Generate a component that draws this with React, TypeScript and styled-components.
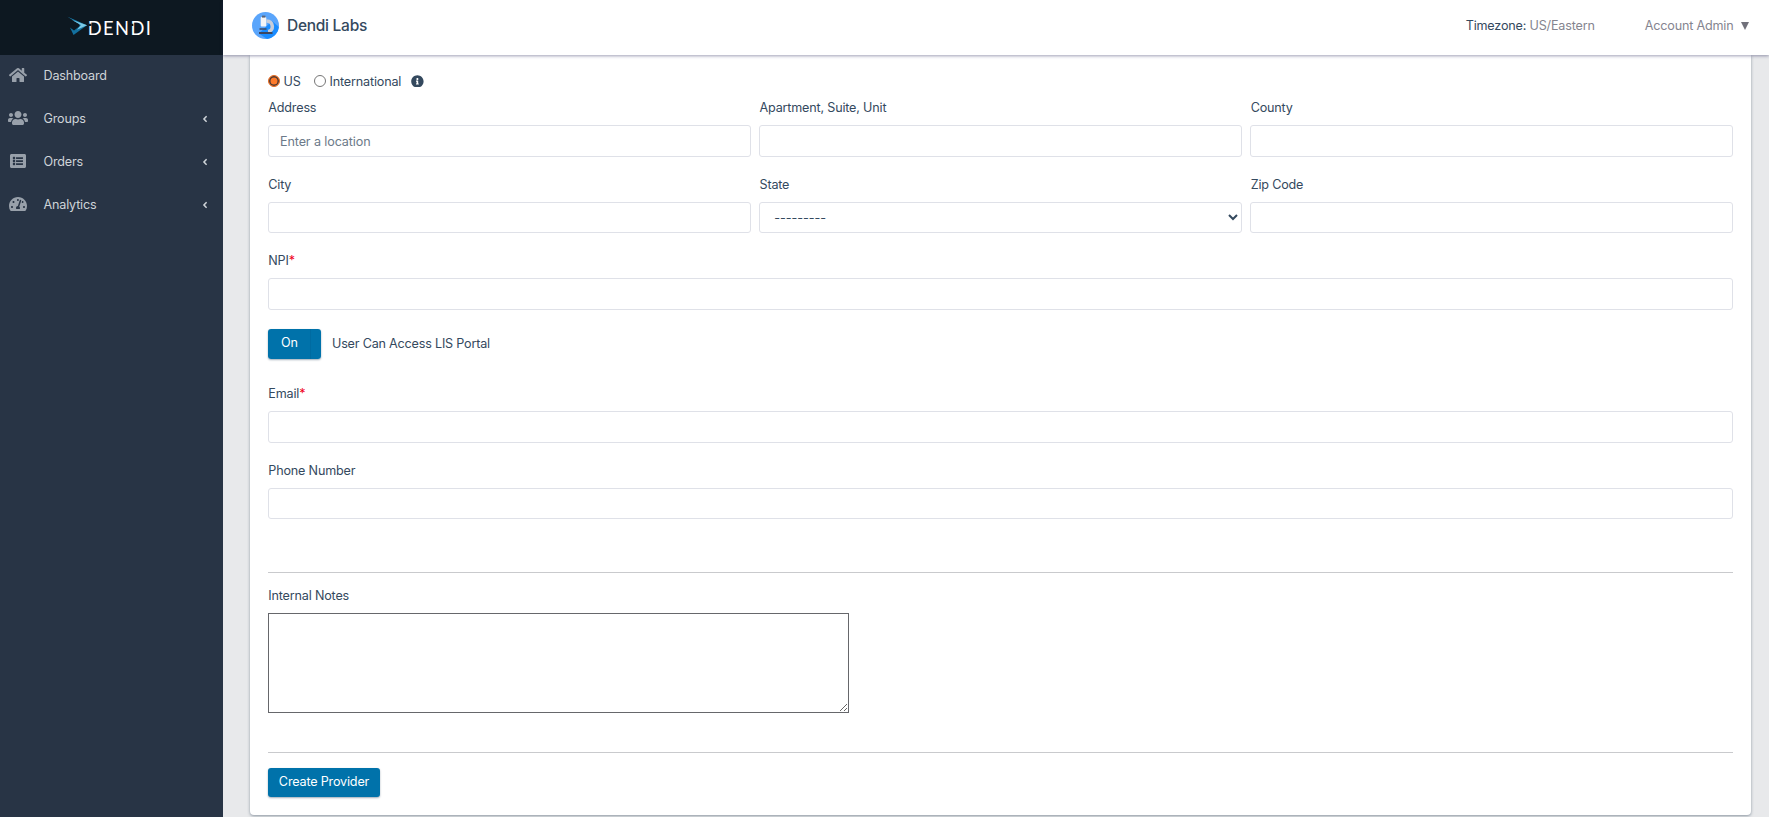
import React from "react";
import styled, { createGlobalStyle } from "styled-components";
import { FaHome, FaUsers, FaListAlt, FaTachometerAlt, FaAngleLeft, FaInfoCircle } from "react-icons/fa";

const GlobalStyle = createGlobalStyle`
  * { box-sizing: border-box; }
  html, body { margin: 0; height: 817px; overflow: hidden; }
  body {
    font-family: Inter, "Liberation Sans", sans-serif;
    font-size: 12.6px;
    letter-spacing: -0.18px;
    color: #34495e;
    background: #e8e9eb;
  }
  input, select, textarea, button { font: inherit; color: inherit; letter-spacing: inherit; }
`;

const Shell = styled.div`
  display: grid;
  grid-template-columns: 223px 1fr;
  grid-template-rows: 55px 762px;
  height: 817px;
`;

const Brand = styled.div`
  display: flex;
  background: #0d1821;
  padding: 16px 0 0 67px;
`;

const Wordmark = styled.svg`
  display: block;
  width: 86px;
  height: 22px;
  overflow: visible;
  letter-spacing: 0;
`;

const Header = styled.header`
  display: flex;
  align-items: center;
  background: #fff;
  padding: 0 20px 5px 29px;
  box-shadow: 0 1px 3px rgba(40, 40, 90, 0.45);
  z-index: 2;
`;

const LabIcon = styled.svg`
  width: 27px;
  height: 27px;
  margin-right: 8px;
`;

const LabName = styled.h1`
  flex: 1;
  margin: 0;
  font-size: 15.5px;
  font-weight: 500;
  letter-spacing: -0.27px;
`;

const Timezone = styled.div`
  span { color: #85858f; }
`;

const Account = styled.div`
  display: flex;
  align-items: center;
  margin-left: 50px;
  color: #85858f;
`;

const Caret = styled.span`
  width: 0;
  height: 0;
  margin: 1px 0 0 7.5px;
  border: 4px solid transparent;
  border-top: 8px solid #71717b;
  border-bottom: 0;
`;

const Sidebar = styled.nav`
  background: #283445;
`;

const NavItem = styled.a`
  display: flex;
  align-items: center;
  height: 43px;
  padding: 0 13px 2px 7px;
  color: #ced3d8;
`;

const NavIcon = styled.span<{ $width: number }>`
  display: flex;
  justify-content: center;
  width: 22px;
  margin: 0 14.5px 1px 0;
  color: #98a0aa;
  svg { flex: none; width: ${(p) => p.$width}px; height: 16px; }
`;

const NavLabel = styled.span`
  flex: 1;
`;

const Main = styled.main`
  padding: 0 18px 0 27px;
`;

const Card = styled.form`
  height: 760px;
  padding: 15px 18px 0;
  background: #fff;
  border-radius: 0 0 4px 4px;
  box-shadow: 0 1px 3px rgba(50, 70, 90, 0.5);
`;

const RadioRow = styled.div`
  display: flex;
  align-items: center;
  height: 22px;
  margin-bottom: 8px;
`;

const Radio = styled.span<{ $on?: boolean }>`
  width: 12px;
  height: 12px;
  margin: 0 3.5px 1px 0;
  border-radius: 50%;
  border: 1px solid ${(p) => (p.$on ? "#e06a24" : "#767676")};
  background: ${(p) => (p.$on ? "#ff7a2a" : "#fff")};
  box-shadow: ${(p) => (p.$on ? "inset 0 0 0 1.5px #4b3a35" : "none")};
`;

const RadioLabel = styled.label<{ $gap: number }>`
  margin-right: ${(p) => p.$gap}px;
  line-height: 16px;
  padding-top: 1px;
`;

const Columns = styled.div`
  display: grid;
  grid-template-columns: repeat(3, 1fr);
  gap: 8.6px;
`;

const Field = styled.div<{ $gap?: number; $top?: number }>`
  display: flex;
  flex-direction: column;
  padding-top: ${(p) => p.$top ?? 0}px;
  margin-bottom: ${(p) => p.$gap ?? 20}px;
`;

const Label = styled.label<{ $required?: boolean }>`
  height: 16px;
  margin-bottom: 9px;
  padding-left: 0.3px;
  line-height: 16px;
  &::after {
    content: ${(p) => (p.$required ? '"*"' : "none")};
    color: #f00020;
  }
`;

const Input = styled.input<{ $h?: number }>`
  height: ${(p) => p.$h ?? 32}px;
  width: 100%;
  padding: 1px 11px 0;
  border: 1px solid #dfe1e8;
  border-radius: 3px;
  background: #fff;
  outline: 0;
  &::placeholder { color: #6c7a89; opacity: 1; letter-spacing: -0.12px; }
`;

const Select = styled.select`
  height: 31px;
  width: 100%;
  padding: 0 10px;
  border: 1px solid #dfe1e8;
  border-radius: 3px;
  background: #fff;
  letter-spacing: -0.05px;
`;

const ToggleRow = styled.div`
  display: flex;
  align-items: center;
  margin: -1px 0 27px;
`;

const ToggleLabel = styled.span`
  padding-bottom: 1px;
  letter-spacing: -0.2px;
`;

const Toggle = styled.button`
  width: 53px;
  height: 30px;
  margin-right: 11px;
  padding: 0 0 3px 13px;
  text-align: left;
  border: 0;
  border-radius: 3px;
  color: #fff;
  background: linear-gradient(90deg, #0072aa 42px, #006ba1 42px, #006ba1 43px, #0072aa 43px);
  box-shadow: 0 1px 2px rgba(20, 50, 80, 0.4);
`;

const Rule = styled.hr`
  height: 1px;
  margin: 0;
  border: 0;
  background: #c9cacd;
`;

const Notes = styled.textarea`
  display: block;
  width: 581px;
  height: 100px;
  border: 1px solid #66676b;
  border-radius: 0;
  resize: both;
`;

const Submit = styled.button`
  width: 112px;
  height: 29px;
  margin-top: 15px;
  padding: 0 0 2px;
  border: 0;
  border-radius: 3px;
  color: #fff;
  background: #0072aa;
  box-shadow: 0 1px 2px rgba(20, 50, 80, 0.4);
`;

const links = [
  { label: "Dashboard", Icon: FaHome, width: 18, nested: false },
  { label: "Groups", Icon: FaUsers, width: 20, nested: true },
  { label: "Orders", Icon: FaListAlt, width: 16, nested: true },
  { label: "Analytics", Icon: FaTachometerAlt, width: 18, nested: true },
];

export default function App() {
  return (
    <>
      <GlobalStyle />
      <Shell>
        <Brand>
          <Wordmark viewBox="0 0 86 22">
            <path d="M0.5 0.8 20 9.3 14 12.5 12 8Z" fill="#1b86b8" />
            <path d="M20 9.3 6.5 19 3 11.5 7 14.5 14 9Z" fill="#13709f" />
            <path d="M5 4 20 9.3 10 13.8 14 9Z" fill="#7cc9e6" />
            <text x="20.8" y="19" fill="#fff" fontFamily="Lato" fontSize="18.3" textLength="63">DENDI</text>
            <path d="M21.5 7.7h3v2.3h-3zM63.3 7.7h3v2.3h-3z" fill="#0d1821" />
          </Wordmark>
        </Brand>
        <Header>
          <LabIcon viewBox="0 0 27 27">
            <circle cx="13.5" cy="13.5" r="13.5" fill="#5aa5fb" />
            <path d="M20 9 26.9 15A13.5 13.5 0 0 1 15 27L7 21.5Z" fill="#1a8cff" />
            <path d="M14.5 9c7.5 0 7.5 10 1.5 10.5" fill="none" stroke="#c8cdd9" strokeWidth="3.6" />
            <rect x="8.7" y="5" width="5.6" height="9.5" rx="1" fill="#f4f4f6" />
            <rect x="10" y="3.6" width="3.4" height="2" fill="#5a6478" />
            <path d="M7 20h13.5v2H7zM7.5 16.2h7v1.5h-7z" fill="#3c4761" />
          </LabIcon>
          <LabName>Dendi Labs</LabName>
          <Timezone>Timezone: <span>US/Eastern</span></Timezone>
          <Account>Account Admin<Caret /></Account>
        </Header>
        <Sidebar>
          {links.map(({ label, Icon, width, nested }) => (
            <NavItem key={label}>
              <NavIcon $width={width}><Icon preserveAspectRatio="xMidYMid meet" /></NavIcon>
              <NavLabel>{label}</NavLabel>
              {nested && <FaAngleLeft size={10} />}
            </NavItem>
          ))}
        </Sidebar>
        <Main>
          <Card>
            <RadioRow>
              <Radio $on /><RadioLabel $gap={13.5}>US</RadioLabel>
              <Radio /><RadioLabel $gap={10}>International</RadioLabel>
              <FaInfoCircle size={12.8} />
            </RadioRow>
            <Columns>
              <Field><Label>Address</Label><Input placeholder="Enter a location" /></Field>
              <Field><Label>Apartment, Suite, Unit</Label><Input /></Field>
              <Field><Label>County</Label><Input /></Field>
            </Columns>
            <Columns>
              <Field><Label>City</Label><Input $h={31} /></Field>
              <Field><Label>State</Label><Select><option>---------</option></Select></Field>
              <Field><Label>Zip Code</Label><Input $h={31} /></Field>
            </Columns>
            <Field><Label $required>NPI</Label><Input /></Field>
            <ToggleRow>
              <Toggle type="button">On</Toggle>
              <ToggleLabel>User Can Access LIS Portal</ToggleLabel>
            </ToggleRow>
            <Field><Label $required>Email</Label><Input /></Field>
            <Field $gap={53}><Label>Phone Number</Label><Input $h={31} /></Field>
            <Rule />
            <Field $top={15} $gap={39}><Label>Internal Notes</Label><Notes /></Field>
            <Rule />
            <Submit type="button">Create Provider</Submit>
          </Card>
        </Main>
      </Shell>
    </>
  );
}
